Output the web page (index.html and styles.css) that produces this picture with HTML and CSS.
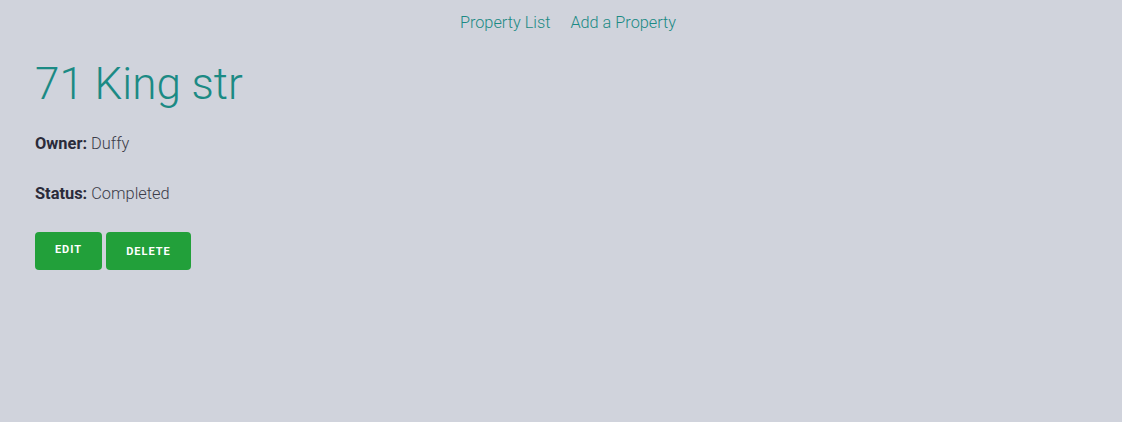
FILE: index.html
```html
<!DOCTYPE html>
<html>
<head>
<meta charset="utf-8">
<link rel="stylesheet" href="styles.css">
</head>
<body>
<nav class="nav">
  <a href="#" class="nav-link">Property List</a>
  <a href="#" class="nav-link">Add a Property</a>
</nav>
<main class="page">
  <h1 class="title">71 King str</h1>
  <p class="field"><strong>Owner:</strong> Duffy</p>
  <p class="field"><strong>Status:</strong> Completed</p>
  <div class="actions">
    <a href="#" class="btn btn-edit">EDIT</a>
    <button class="btn btn-delete">DELETE</button>
  </div>
</main>
</body>
</html>
```

FILE: styles.css
```css
html, body {
  margin: 0;
  padding: 0;
}
body {
  background: #d0d3dc;
  font-family: Roboto, "Liberation Sans", sans-serif;
  font-weight: 300;
  color: #3d3d4a;
  font-size: 16px;
}
.nav {
  display: flex;
  justify-content: center;
  gap: 20px;
  padding-top: 13px;
  padding-left: 14px;
  line-height: 20px;
}
.nav-link {
  color: #1b8a84;
  text-decoration: none;
  font-size: 16.3px;
}
.page {
  padding: 0 35px;
}
.title {
  font-size: 44px;
  font-weight: 300;
  color: #1b8a84;
  margin: 25px 0 0;
  line-height: 52px;
}
.field {
  margin: 22px 0 0;
  line-height: 24px;
  font-size: 16.4px;
}
.field + .field {
  margin-top: 26px;
}
.field strong {
  font-weight: 700;
  color: #2b2b3a;
}
.actions {
  display: flex;
  gap: 4px;
  margin-top: 26px;
}
.btn {
  display: flex;
  align-items: center;
  justify-content: center;
  height: 38px;
  box-sizing: border-box;
  background: #22a03a;
  color: #fff;
  border: none;
  border-radius: 4px;
  font-family: Roboto, "Liberation Sans", sans-serif;
  font-weight: 700;
  font-size: 11px;
  letter-spacing: 1px;
  text-decoration: none;
}
.btn-edit {
  width: 67px;
  padding-bottom: 4px;
}
.btn-delete {
  width: 85px;
}
```
